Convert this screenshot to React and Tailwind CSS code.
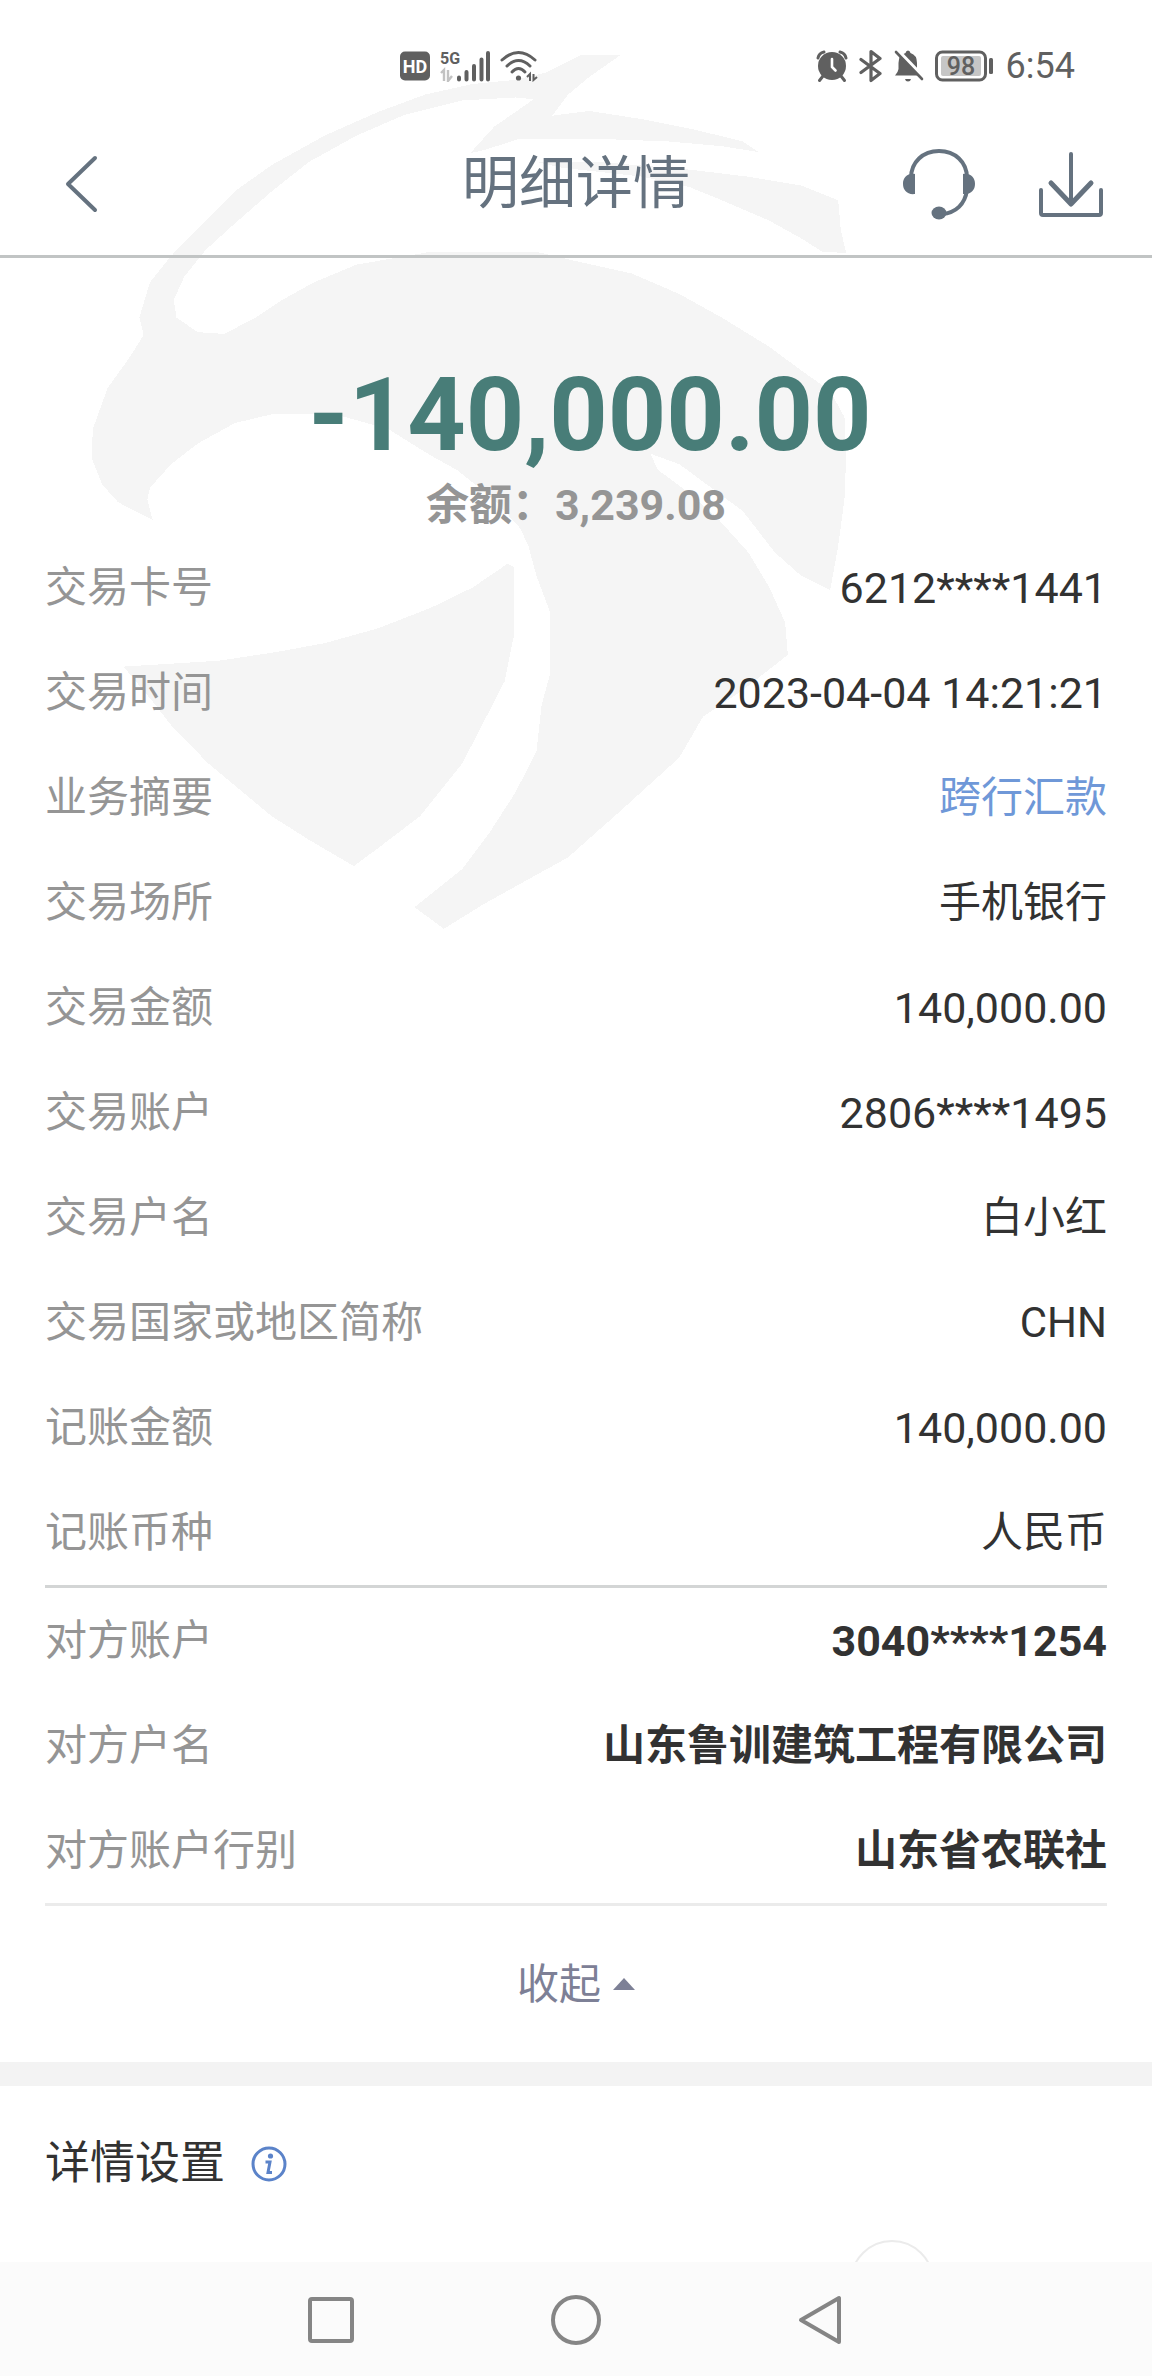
// Transaction fields shown above the first divider
const transactionRows = [
  { label: "交易卡号", value: "6212****1441", numeric: true },
  { label: "交易时间", value: "2023-04-04 14:21:21", numeric: true },
  { label: "业务摘要", value: "跨行汇款", href: "#summary" },
  { label: "交易场所", value: "手机银行" },
  { label: "交易金额", value: "140,000.00", numeric: true },
  { label: "交易账户", value: "2806****1495", numeric: true },
  { label: "交易户名", value: "白小红" },
  { label: "交易国家或地区简称", value: "CHN" },
  { label: "记账金额", value: "140,000.00", numeric: true },
  { label: "记账币种", value: "人民币" },
];

// The other party of the transfer
const counterpartyRows = [
  { label: "对方账户", value: "3040****1254", numeric: true },
  { label: "对方户名", value: "山东鲁训建筑工程有限公司" },
  { label: "对方账户行别", value: "山东省农联社" },
];

// Pale eagle head behind the upper half of the page
function EagleWatermark() {
  return (
    <svg
      className="pointer-events-none absolute top-[30px] left-[60px] h-[920px] w-[830px] fill-[#f5f5f5]"
      viewBox="0 0 1568 1568"
      preserveAspectRatio="none"
      shapeRendering="crispEdges"
      aria-hidden="true"
    >
      <path d="M1060 42L985 42L920 72L860 85L780 92L690 110L600 140L500 180L400 230L330 275L270 330L210 385L170 430L150 490L158 520L130 560L90 610L62 680L60 730L80 775L110 805L175 835L165 800L170 780L210 740L260 705L330 670L400 655L520 655L620 680L700 725L750 750L820 800L870 850L885 880L900 930L925 990L925 1100L910 1150L900 1230L860 1300L810 1370L760 1430L670 1495L725 1532L800 1490L960 1410L1060 1330L1170 1240L1215 1170L1290 1125L1375 1065L1370 1010L1340 950L1300 890L1240 830L1190 790L1130 750L1115 722L1170 740L1230 780L1290 820L1350 890L1400 930L1455 955L1470 880L1482 800L1485 730L1482 660L1455 615L1400 580L1340 540L1250 490L1170 450L1080 415L980 395L900 378L700 378L560 400L480 430L420 460L370 490L310 518L260 515L220 490L215 460L235 420L275 375L330 330L400 275L470 225L560 180L650 145L760 120L860 115L895 118L860 140L820 165L775 210L800 205L870 185L1000 185L1150 190L1250 198L1320 208L1290 190L1200 170L1100 152L1000 138L930 146L960 110L1000 80Z" />
      <path d="M845 910L780 950L700 985L600 1020L500 1045L410 1060L300 1075L120 1085L180 1150L210 1185L280 1250L400 1340L470 1380L555 1425L600 1395L680 1340L760 1250L800 1180L840 1110L858 1030L858 915Z" />
      <path d="M900 225L1020 225L1190 238L1300 250L1400 265L1470 290L1475 340L1485 380L1440 378L1400 355L1340 325L1250 290L1190 268L1100 250L950 235Z" />
    </svg>
  );
}

function HdIcon() {
  return (
    <svg className="h-8 w-[30px]" viewBox="0 0 30 32" role="img" aria-label="HD">
      <rect y="1.5" width="30" height="29" rx="5" fill="#606060" />
      <text x="15" y="22.5" textAnchor="middle" fontSize="18" fontWeight="700" fill="#fff">
        HD
      </text>
    </svg>
  );
}

function SignalIcon() {
  return (
    <svg className="h-8 w-[50px]" viewBox="0 0 50 32" role="img" aria-label="5G">
      <text x="0" y="14" fontSize="16" fontWeight="700" fill="#606060">
        5G
      </text>
      <path
        d="M1 23L4 20V31M8 20V31L12 26"
        fill="none"
        stroke="#c2c2c2"
        strokeWidth="2.4"
      />
      <path
        d="M19 27.5V29.5M26.5 22V29.5M34 16V29.5M41.5 9.5V29.5M48 3V29.5"
        stroke="#606060"
        strokeWidth="4"
        strokeLinecap="round"
      />
    </svg>
  );
}

function WifiIcon() {
  return (
    <svg className="h-8 w-[38px]" viewBox="0 0 38 32" fill="none" stroke="#606060" aria-hidden="true">
      <path d="M2 10Q18.5 -5 35 10" strokeWidth="3" strokeLinecap="round" />
      <path d="M7 16Q18.5 5 30 16" strokeWidth="3" strokeLinecap="round" />
      <path d="M12 22Q18.5 15 25 22" strokeWidth="3" strokeLinecap="round" />
      <circle cx="18.5" cy="28" r="2.6" fill="#606060" stroke="none" />
      <path d="M27 27L30 24V31M33.5 24V30L37 27" strokeWidth="2" />
    </svg>
  );
}

function AlarmIcon() {
  return (
    <svg className="h-[34px] w-8" viewBox="0 0 32 34" fill="none" stroke="#606060" aria-hidden="true">
      <circle cx="16" cy="17" r="14" fill="#606060" stroke="none" />
      <path d="M2 9Q3 4 8 3M30 9Q29 4 24 3M7 27L3.5 31.5M25 27L28.5 31.5" strokeWidth="3" strokeLinecap="round" />
      <path d="M16 10V18L19.5 21.5" stroke="#fff" strokeWidth="2.6" strokeLinecap="round" />
    </svg>
  );
}

function BluetoothIcon() {
  return (
    <svg className="h-[34px] w-6" viewBox="0 0 24 34" fill="none" stroke="#606060" aria-hidden="true">
      <path
        d="M2 10.5L21 24.5L12 31.5V2.5L21 9.5L2 23.5"
        strokeWidth="3.2"
        strokeLinecap="round"
        strokeLinejoin="round"
      />
    </svg>
  );
}

function BellOffIcon() {
  return (
    <svg className="h-[34px] w-[30px]" viewBox="0 0 30 34" aria-hidden="true">
      <path
        d="M14 1.5Q16 1.5 16.5 4Q23 6 23 14V21L26 26.5H1Q4 23.5 4.5 20V14Q4.5 6 11.5 4Q12 1.5 14 1.5ZM11 30H17Q16.5 32.5 14 32.5Q11.5 32.5 11 30Z"
        fill="#606060"
      />
      <path d="M4 2L30 29" stroke="#fff" strokeWidth="4" />
      <path d="M2 3L28 30" stroke="#606060" strokeWidth="2.6" strokeLinecap="round" />
    </svg>
  );
}

function BatteryIcon() {
  return (
    <svg className="h-[34px] w-[60px]" viewBox="0 0 60 34" role="img" aria-label="98">
      <rect x="1.5" y="3" width="49" height="28" rx="6" fill="#fff" stroke="#606060" strokeWidth="3" />
      <rect x="6" y="7" width="40" height="20" rx="2" fill="#c6c6c6" />
      <rect x="54" y="9" width="4" height="16" rx="1.5" fill="#606060" />
      <text x="26" y="25.5" textAnchor="middle" fontSize="25" fontWeight="500" fill="#606060">
        98
      </text>
    </svg>
  );
}

function StatusBar() {
  return (
    <div className="flex h-28 items-center justify-end gap-[278px] pt-5 pr-[77px]">
      <div className="flex items-center gap-[10px]">
        <HdIcon />
        <SignalIcon />
        <WifiIcon />
      </div>
      <div className="flex items-center gap-[11px]">
        <AlarmIcon />
        <BluetoothIcon />
        <BellOffIcon />
        <BatteryIcon />
        <span className="text-4xl text-[#606060]">6:54</span>
      </div>
    </div>
  );
}

function Header() {
  return (
    <header className="grid h-[146px] grid-cols-[1fr_auto_1fr] items-center border-b-3 border-[#c1c4c4] px-12 text-[#65727f]">
      <button type="button" aria-label="返回" className="justify-self-start px-4">
        <svg className="h-[60px] w-9" viewBox="0 0 36 60" fill="none" stroke="currentColor" strokeWidth="4" strokeLinecap="round" strokeLinejoin="round">
          <path d="M31 4L4 30L31 56" />
        </svg>
      </button>
      <h1 className="text-[57px] leading-none">明细详情</h1>
      <div className="flex items-center gap-[62px] justify-self-end">
        <button type="button" aria-label="客服">
          <svg className="h-[72px] w-[74px]" viewBox="0 0 74 72" fill="none" stroke="currentColor">
            <path d="M9 30C9 14 21 3 37 3C53 3 65 14 65 30M65 42C63 56 54 65 40 66" strokeWidth="4" />
            <path d="M13 26V46C5 47 1 42 1 36C1 30 5 25 13 26ZM61 26V46C69 47 73 42 73 36C73 30 69 25 61 26Z" fill="currentColor" stroke="none" />
            <ellipse cx="37" cy="65" rx="7.5" ry="6.5" fill="currentColor" stroke="none" />
          </svg>
        </button>
        <button type="button" aria-label="下载">
          <svg className="h-[66px] w-[66px]" viewBox="0 0 66 66" fill="none" stroke="currentColor" strokeWidth="4" strokeLinecap="round" strokeLinejoin="round">
            <path d="M3 39V62Q3 64 5 64H61Q63 64 63 62V39" />
            <path d="M33 3V52" />
            <path d="M13 32L33 53L53 32" strokeWidth="5" />
          </svg>
        </button>
      </div>
    </header>
  );
}

function DetailRow({ row, bold }) {
  return (
    <div className="flex h-[105px] items-center justify-between leading-[60px]">
      <dt className="text-[42px] text-[#959595]">{row.label}</dt>
      <dd
        className={`${row.numeric ? "text-[43px]" : "text-[42px]"} ${
          bold ? "font-bold" : ""
        } text-[#323232]`}
      >
        {row.href ? (
          <a href={row.href} className="text-[#6f98d8]">
            {row.value}
          </a>
        ) : (
          row.value
        )}
      </dd>
    </div>
  );
}

function NavigationBar() {
  return (
    <nav className="flex h-[115px] items-center justify-center gap-[195px] bg-[#fbfbfb] text-[#858585]">
      <button type="button" aria-label="最近任务">
        <svg className="size-[50px]" viewBox="0 0 50 50" fill="none" stroke="currentColor" strokeWidth="4">
          <rect x="4" y="4" width="42" height="42" rx="2" />
        </svg>
      </button>
      <button type="button" aria-label="主屏幕">
        <svg className="size-[50px]" viewBox="0 0 50 50" fill="none" stroke="currentColor" strokeWidth="4">
          <circle cx="25" cy="25" r="23" />
        </svg>
      </button>
      <button type="button" aria-label="返回上一页">
        <svg className="size-[50px]" viewBox="0 0 50 50" fill="none" stroke="currentColor" strokeWidth="4" strokeLinejoin="round">
          <path d="M5 25L43 3V47Z" />
        </svg>
      </button>
    </nav>
  );
}

function App() {
  return (
    <div
      lang="zh-CN"
      className="relative bg-white font-['Roboto','Noto_Sans_CJK_SC',sans-serif]"
    >
      <EagleWatermark />
      <div className="relative">
        <StatusBar />
        <Header />

        <main>
          {/* Amount and remaining balance */}
          <section className="pt-[107px] pb-[2px] text-center font-bold">
            <p className="pl-7 text-[102px] leading-[100px] text-[#487d78]">-140,000.00</p>
            <p className="mt-3 text-[43px] leading-[56px] text-[#959595]">余额：3,239.08</p>
          </section>

          <div className="px-[45px]">
            <dl>
              {transactionRows.map((row) => (
                <DetailRow key={row.label} row={row} />
              ))}
            </dl>
            <dl className="border-y-3 border-t-[#d3d5d5] border-b-[#ebebeb]">
              {counterpartyRows.map((row) => (
                <DetailRow key={row.label} row={row} bold />
              ))}
            </dl>
          </div>

          <button
            type="button"
            className="flex h-[156px] w-full items-center justify-center gap-3 text-[42px] text-[#7d8096]"
          >
            收起
            <svg className="h-3 w-[22px]" viewBox="0 0 22 12" fill="currentColor" aria-hidden="true">
              <path d="M11 0L22 12H0Z" />
            </svg>
          </button>

          {/* Settings block, its switch is cut off by the navigation bar */}
          <section className="relative overflow-hidden border-t-24 border-[#f3f3f3] pb-5">
            <div className="flex h-[156px] items-center gap-[26px] px-[45px]">
              <h2 className="text-[45px] text-[#323232]">详情设置</h2>
              <button type="button" aria-label="说明">
                <svg className="size-9" viewBox="0 0 36 36" fill="none" stroke="#5b83c9" strokeWidth="3">
                  <circle cx="18" cy="18" r="16" />
                  <circle cx="19.5" cy="10" r="2.6" fill="#5b83c9" stroke="none" />
                  <path d="M14.5 16H19L17 26.5H21" />
                </svg>
              </button>
            </div>
            <span className="absolute top-[154px] right-[218px] size-[84px] rounded-full border-2 border-[#ebebeb]" />
          </section>
        </main>

        <NavigationBar />
      </div>
    </div>
  );
}

export default App;
